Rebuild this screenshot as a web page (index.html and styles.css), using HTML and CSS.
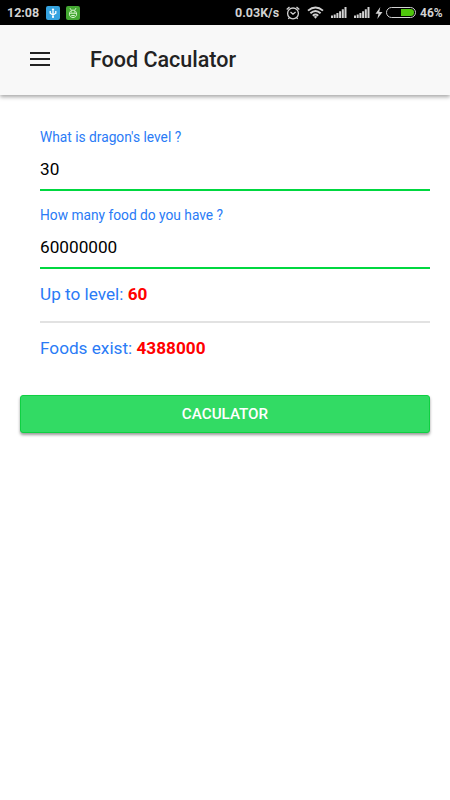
FILE: index.html
```html
<!DOCTYPE html>
<html>
<head>
    <meta charset="UTF-8">
    <title>Food Caculator</title>
    <meta name="viewport" content="width=device-width, initial-scale=1.0">
    <link rel="stylesheet" href="styles.css">
</head>
<body>
<div class="status">
    <span class="time">12:08</span>
    <svg class="app usb" viewBox="0 0 14 14">
        <rect width="14" height="14" rx="2" fill="#35a3e0"/>
        <path d="M7 3v8M4.2 5v2.2L7 9l2.8-1.8V5" fill="none" stroke="#fff" stroke-width="1.3"/>
        <path d="M5.6 4L7 2l1.4 2z" fill="#fff"/>
        <circle cx="7" cy="11" r="1.1" fill="#fff"/>
    </svg>
    <svg class="app bug" viewBox="0 0 14 14">
        <rect width="14" height="14" rx="2" fill="#44a832"/>
        <path d="M4 2.2l1.4 2M10 2.2l-1.4 2M3.6 7.2h6.8M3.4 8.2C3.4 2.8 10.6 2.8 10.6 8.2C10.6 12.6 3.4 12.6 3.4 8.2z" fill="none" stroke="#d9f5d0" stroke-width="1"/>
        <path d="M5 5.9h1M8 5.9h1M5.3 9.5h3.4" stroke="#d9f5d0"/>
    </svg>
    <span class="speed">0.03K/s</span>
    <svg class="alarm" viewBox="0 0 14 14">
        <g fill="none" stroke="#d2d2d2" stroke-width="1.3">
            <circle cx="7" cy="7.4" r="5.4"/>
            <path d="M4.5 6L7 8.2l2.6-2.2M.7 3.6L3.5 1M13.3 3.6L10.5 1M3.2 11.8L2.4 13M10.8 11.8L11.6 13"/>
        </g>
    </svg>
    <svg class="wifi" viewBox="0 0 17 13">
        <g fill="none" stroke="#d2d2d2" stroke-width="1.9">
            <path d="M1 4.6Q8.5-1.8 16 4.6M3.4 7.2Q8.5 2.6 13.6 7.2M5.8 9.7Q8.5 7.3 11.2 9.7"/>
        </g>
        <path d="M6.8 10.7Q8.5 9.4 10.2 10.7L8.5 12.7z" fill="#d2d2d2"/>
    </svg>
    <svg class="signal" viewBox="0 0 16 11">
        <path d="M0 8.6h2V11H0zM2.7 7.4h2V11h-2zM5.4 6h2v5h-2zM8.1 4.3h2V11h-2zM10.8 2.3h2V11h-2zM13.5 0h2v11h-2z" fill="#d2d2d2"/>
    </svg>
    <svg class="signal second" viewBox="0 0 16 11">
        <path d="M0 8.6h2V11H0zM2.7 7.4h2V11h-2zM5.4 6h2v5h-2zM8.1 4.3h2V11h-2zM10.8 2.3h2V11h-2zM13.5 0h2v11h-2z" fill="#d2d2d2"/>
    </svg>
    <svg class="bolt" viewBox="0 0 8 12">
        <path d="M5.3 0L.5 6.8h3L2.3 12 7.5 4.9H4.3z" fill="#d2d2d2"/>
    </svg>
    <div class="battery">
        <div class="charge"></div>
    </div>
    <span class="percent">46%</span>
</div>

<div class="header">
    <div class="menu">
        <span></span>
        <span></span>
        <span></span>
    </div>
    <h1>Food Caculator</h1>
</div>

<div class="content">
    <div class="field">
        <label for="level">What is dragon's level ?</label>
        <input id="level" type="text" value="30">
    </div>
    <div class="field">
        <label for="food">How many food do you have ?</label>
        <input id="food" type="text" value="60000000">
    </div>
    <div class="result line">Up to level: <b>60</b></div>
    <div class="result">Foods exist: <b>4388000</b></div>
    <button class="btn">CACULATOR</button>
</div>
</body>
</html>
```

FILE: styles.css
```css
* {
    margin: 0;
    padding: 0;
    box-sizing: border-box;
}
body {
    min-height: 100vh;
    background-color: #fff;
    font-family: Roboto, "Liberation Sans", sans-serif;
}
/* status bar */
.status {
    display: flex;
    align-items: center;
    height: 25px;
    padding: 0 8px 0 7px;
    background-color: #000;
    color: #d2d2d2;
    font-size: 12px;
    font-weight: bold;
    white-space: nowrap;
}
.status svg {
    flex: none;
}
.time {
    width: 39px;
    font-size: 12.5px;
}
.app {
    width: 14px;
    height: 14px;
}
.bug {
    margin-left: 6px;
}
.speed {
    width: 44px;
    margin-left: auto;
    font-size: 12.5px;
}
.alarm {
    width: 14px;
    height: 14px;
    margin-left: 7px;
}
.wifi {
    width: 17px;
    height: 13px;
    margin-left: 7px;
}
.signal {
    width: 16px;
    height: 11px;
    margin-left: 7px;
}
.bolt {
    width: 8px;
    height: 12px;
    margin-left: 5px;
}
.battery {
    flex: none;
    width: 30px;
    height: 11px;
    margin-left: 3px;
    padding: 1px;
    border: 1px solid #d2d2d2;
    border-radius: 6px;
}
.charge {
    width: 13px;
    height: 7px;
    margin-left: auto;
    border-radius: 0 4px 4px 0;
    background-color: #4fc60c;
}
.percent {
    width: 22px;
    margin-left: 4px;
}
/* toolbar */
.header {
    display: flex;
    align-items: center;
    height: 70px;
    padding: 0 30px;
    background-color: #f8f8f8;
    box-shadow: 0 2px 4px rgba(0, 0, 0, .35);
}
.menu {
    display: flex;
    flex-direction: column;
    justify-content: space-between;
    width: 20px;
    height: 14px;
    margin-top: -2px;
}
.menu span {
    height: 2px;
    background-color: #222;
}
.header h1 {
    margin: -2px 0 0 40px;
    font-size: 21.5px;
    font-weight: 500;
    color: #222;
}
/* form */
.content {
    padding: 26px 20px;
}
.field {
    height: 77.5px;
    margin-left: 20px;
}
.field label {
    display: block;
    padding-top: 8px;
    line-height: 16px;
    font-size: 13.75px;
    color: #2a7bf6;
}
.field input {
    display: block;
    width: 100%;
    height: 46px;
    padding-top: 4px;
    border: 0;
    border-bottom: 2px solid #00d840;
    outline: 0;
    background: none;
    font-family: inherit;
    font-size: 17.2px;
    color: #000;
}
.result {
    height: 54px;
    margin-left: 20px;
    line-height: 50px;
    font-size: 17.2px;
    color: #2a7bf6;
}
.result.line {
    height: 54px;
    margin-top: -7px;
    border-bottom: 2px solid #e2e2e2;
}
.result b {
    color: #f00;
}
.btn {
    display: block;
    width: 100%;
    height: 38px;
    margin-top: 18px;
    padding-bottom: 1px;
    border: 1px solid #0fd042;
    border-radius: 3px;
    background-color: #32db64;
    box-shadow: 0 2px 3px rgba(0, 0, 0, .4);
    font-family: inherit;
    font-size: 15.2px;
    font-weight: 500;
    color: #fff;
}
```
